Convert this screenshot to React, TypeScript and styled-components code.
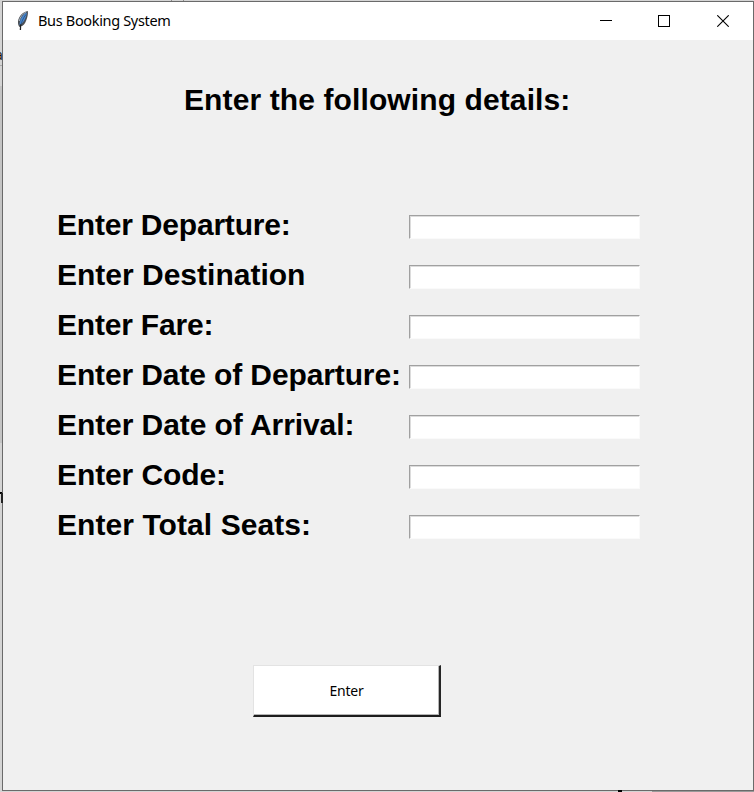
import React from 'react';
import styled, { createGlobalStyle } from 'styled-components';

const GlobalStyle = createGlobalStyle`
  * { box-sizing: border-box; }
  body { margin: 0; overflow: hidden; background: #d2d2d2; }
`;

const Desktop = styled.div`
  position: relative;
  width: 754px;
  height: 792px;
  padding: 1px 0 0 2px;
  overflow: hidden;
  background: #d4d4d4;
`;

const Fragment = styled.span<{ $x: number; $y: number; $w: number; $h: number; $color: string }>`
  position: absolute;
  left: ${(p) => p.$x}px;
  top: ${(p) => p.$y}px;
  width: ${(p) => p.$w}px;
  height: ${(p) => p.$h}px;
  background: ${(p) => p.$color};
`;

const ClippedLetter = styled.span<{ $x: number; $y: number; $size: number }>`
  position: absolute;
  left: ${(p) => p.$x}px;
  top: ${(p) => p.$y}px;
  font: ${(p) => p.$size}px/1 'Open Sans', sans-serif;
  color: #111;
`;

const Window = styled.main`
  position: relative;
  display: flex;
  flex-direction: column;
  width: 752px;
  height: 790px;
  border: 1px solid #6a6a6a;
  background: #f0f0f0;
`;

const TitleBar = styled.header`
  display: flex;
  align-items: center;
  height: 38px;
  flex: none;
  background: #fff;
`;

const AppIcon = styled.svg`
  width: 16px;
  height: 22px;
  margin-left: 12px;
  flex: none;
`;

const WindowTitle = styled.span`
  margin: -2px 0 0 7px;
  flex: 1;
  font: 14.5px/20px 'Noto Sans', sans-serif;
  letter-spacing: -0.33px;
  color: #000;
  white-space: nowrap;
`;

const Controls = styled.div`
  display: flex;
  height: 100%;
  margin-right: 1px;
`;

const ControlButton = styled.button`
  display: flex;
  align-items: center;
  justify-content: center;
  width: 58.5px;
  padding: 0;
  border: 0;
  background: transparent;
`;

const Heading = styled.h1`
  margin: 42px 0 0 181px;
  height: 36px;
  font: bold 30px/36px 'Liberation Sans', Arial, sans-serif;
  letter-spacing: 0.11px;
  color: #000;
  white-space: nowrap;
`;

const Form = styled.form`
  display: flex;
  flex-direction: column;
`;

const Fields = styled.div`
  display: grid;
  grid-template-columns: 352px 231px;
  grid-auto-rows: 50px;
  margin: 82px 0 0 54px;
`;

const Label = styled.label<{ $spacing: number }>`
  padding-top: 7px;
  font: bold 30px/36px 'Liberation Sans', Arial, sans-serif;
  letter-spacing: ${(p) => p.$spacing}px;
  color: #000;
  white-space: nowrap;
`;

const Entry = styled.input`
  width: 231px;
  height: 24px;
  margin-top: 15px;
  padding: 0 2px;
  border: 1px solid;
  border-color: #a0a0a0 #fafafa #fafafa #a0a0a0;
  border-radius: 0;
  outline: 0;
  background: #fff;
  box-shadow: inset 1px 1px 0 #dcdcdc;
`;

const SubmitButton = styled.button`
  width: 188px;
  height: 52px;
  margin: 115px 0 0 250px;
  padding: 0;
  border: solid;
  border-width: 1px 2px 2px 1px;
  border-color: #e3e3e3 #252525 #1c1c1c #e3e3e3;
  border-radius: 0;
  background: #fff;
  box-shadow: inset -1px -1px 0 #b5b5b5;
  font: 14px/20px 'Noto Sans', sans-serif;
  letter-spacing: -0.2px;
  color: #000;
`;

const FIELDS = [
  { id: 'departure', label: 'Enter Departure:', spacing: -0.2 },
  { id: 'destination', label: 'Enter Destination', spacing: 0 },
  { id: 'fare', label: 'Enter Fare:', spacing: -0.2 },
  { id: 'departure-date', label: 'Enter Date of Departure:', spacing: -0.12 },
  { id: 'arrival-date', label: 'Enter Date of Arrival:', spacing: -0.07 },
  { id: 'code', label: 'Enter Code:', spacing: -0.1 },
  { id: 'seats', label: 'Enter Total Seats:', spacing: 0.07 },
];

const FeatherIcon = () => (
  <AppIcon viewBox="0 0 16 22">
    <path d="M12.800 1C8 2 3.700 6 3 11.500c-.2 2 .4 4 1.300 5.500l1.500-.8c2.500-.2 4.200-2.700 5.400-5.700C12.300 7.500 13.400 4 12.800 1Z" fill="#4b4f55" />
    <path d="M11.800 2.500C8 4 5 8.500 4.500 15 9 12.500 11.500 7 11.800 2.500Z" fill="#4688d2" />
    <path d="M10.900 4.500C8.300 8 6.300 12 5.800 16" stroke="#27466e" strokeWidth=".7" fill="none" />
    <path d="M10.800 2.300C7.600 3.800 5 7 4.300 11" stroke="#a9b4c0" strokeWidth="1" fill="none" />
    <path d="M5.700 14.500L5.400 20" stroke="#222" strokeWidth="1.300" />
  </AppIcon>
);

export default function App() {
  return (
    <>
      <GlobalStyle />
      <Desktop>
        <Fragment $x={171} $y={0} $w={1} $h={1} $color="#8c8c8c" />
        <Fragment $x={183} $y={0} $w={1} $h={1} $color="#8c8c8c" />
        <Fragment $x={0} $y={65} $w={2} $h={1} $color="#aaa" />
        <Fragment $x={0} $y={86} $w={2} $h={357} $color="#c4c4c4" />
        <ClippedLetter $x={-5} $y={48} $size={14}>a</ClippedLetter>
        <Window>
          <TitleBar>
            <FeatherIcon />
            <WindowTitle>Bus Booking System</WindowTitle>
            <Controls>
              <ControlButton type="button" aria-label="Minimize">
                <svg width="12" height="12" viewBox="0 0 12 12" shapeRendering="crispEdges">
                  <path d="M0 5.500h12" stroke="#000" />
                </svg>
              </ControlButton>
              <ControlButton type="button" aria-label="Maximize">
                <svg width="12" height="12" viewBox="0 0 12 12" shapeRendering="crispEdges">
                  <path d="M.5.5h11v11H.5z" fill="none" stroke="#000" />
                </svg>
              </ControlButton>
              <ControlButton type="button" aria-label="Close">
                <svg width="12" height="12" viewBox="0 0 12 12">
                  <path d="M.3.3l11.400 11.400M11.700.3L.3 11.700" stroke="#000" strokeWidth="1.100" />
                </svg>
              </ControlButton>
            </Controls>
          </TitleBar>
          <Heading>Enter the following details:</Heading>
          <Form>
            <Fields>
              {FIELDS.map((field) => (
                <React.Fragment key={field.id}>
                  <Label htmlFor={field.id} $spacing={field.spacing}>{field.label}</Label>
                  <Entry id={field.id} />
                </React.Fragment>
              ))}
            </Fields>
            <SubmitButton type="button">Enter</SubmitButton>
          </Form>
        </Window>
        <Fragment $x={0} $y={492} $w={2} $h={2} $color="#000" />
        <Fragment $x={1} $y={493} $w={2} $h={10} $color="#222" />
        <Fragment $x={618} $y={790} $w={4} $h={2} $color="#000" />
        <Fragment $x={652} $y={791} $w={102} $h={1} $color="#999" />
      </Desktop>
    </>
  );
}
